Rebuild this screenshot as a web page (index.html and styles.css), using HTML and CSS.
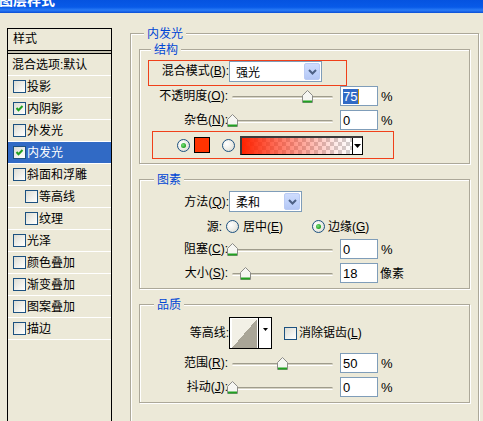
FILE: index.html
```html
<!DOCTYPE html>
<html lang="zh-CN">
<head>
<meta charset="utf-8">
<title>图层样式</title>
<link rel="stylesheet" href="styles.css">
</head>
<body>
<div class="window">
  <div class="titlebar"><span class="title">图层样式</span></div>
  <div class="main">
    <div class="sidebar">
      <div class="side-head">样式</div>
      <div class="side-sep"></div>
      <ul class="side-list">
        <li class="side-item plain">混合选项:默认</li>
        <li class="side-item"><span class="cb"></span>投影</li>
        <li class="side-item"><span class="cb"><svg width="11" height="11" viewBox="0 0 11 11"><path d="M2.5 5 L4.5 7.2 L8.5 3" fill="none" stroke="#21A121" stroke-width="2"/></svg></span>内阴影</li>
        <li class="side-item"><span class="cb"></span>外发光</li>
        <li class="side-item selected"><span class="cb"><svg width="11" height="11" viewBox="0 0 11 11"><path d="M2.5 5 L4.5 7.2 L8.5 3" fill="none" stroke="#21A121" stroke-width="2"/></svg></span>内发光</li>
        <li class="side-item"><span class="cb"></span>斜面和浮雕</li>
        <li class="side-item sub"><span class="cb"></span>等高线</li>
        <li class="side-item sub"><span class="cb"></span>纹理</li>
        <li class="side-item"><span class="cb"></span>光泽</li>
        <li class="side-item"><span class="cb"></span>颜色叠加</li>
        <li class="side-item"><span class="cb"></span>渐变叠加</li>
        <li class="side-item"><span class="cb"></span>图案叠加</li>
        <li class="side-item"><span class="cb"></span>描边</li>
      </ul>
    </div>

    <div class="group outer">
      <span class="group-title t-outer">内发光</span>

      <div class="group inner g1">
        <span class="group-title t-struct">结构</span>
        <div class="blend-box">
          <span class="lbl lbl-blend">混合模式(<u>B</u>):</span>
          <div class="combo combo-blend">
            <span class="combo-text">强光</span>
            <span class="combo-btn"><svg width="9" height="6" viewBox="0 0 9 6"><path d="M1 1 L4.5 4.5 L8 1" fill="none" stroke="#4D6185" stroke-width="2"/></svg></span>
          </div>
        </div>
        <div class="row r-opacity">
          <span class="lbl">不透明度(<u>O</u>):</span>
          <div class="slider"><div class="track"></div><span class="thumb" style="left:70px"><svg width="11" height="13" viewBox="0 0 11 13"><path d="M0.5 5.5 L5.5 0.5 L10.5 5.5 V12.5 H0.5 Z" fill="#F6F6F2" stroke="#8C8C88"/><path d="M1 11.5 H10" stroke="#21A121" stroke-width="2"/></svg></span></div>
          <div class="input"><span class="sel">75</span><span class="caret"></span></div>
          <span class="unit">%</span>
        </div>
        <div class="row r-noise">
          <span class="lbl">杂色(<u>N</u>):</span>
          <div class="slider"><div class="track"></div><span class="thumb" style="left:-5px"><svg width="11" height="13" viewBox="0 0 11 13"><path d="M0.5 5.5 L5.5 0.5 L10.5 5.5 V12.5 H0.5 Z" fill="#F6F6F2" stroke="#8C8C88"/><path d="M1 11.5 H10" stroke="#21A121" stroke-width="2"/></svg></span></div>
          <div class="input">0</div>
          <span class="unit">%</span>
        </div>
        <div class="color-box">
          <span class="radio on"></span>
          <span class="swatch"></span>
          <span class="radio r2"></span>
          <div class="gradient">
            <span class="grad-fill"></span>
            <span class="grad-btn"><svg width="7" height="4" viewBox="0 0 7 4"><path d="M0 0 H7 L3.5 4 Z" fill="#000"/></svg></span>
          </div>
        </div>
      </div>

      <div class="group inner g2">
        <span class="group-title t-elem">图素</span>
        <div class="row r-method">
          <span class="lbl lbl-combo">方法(<u>Q</u>):</span>
          <div class="combo combo-method">
            <span class="combo-text">柔和</span>
            <span class="combo-btn"><svg width="9" height="6" viewBox="0 0 9 6"><path d="M1 1 L4.5 4.5 L8 1" fill="none" stroke="#4D6185" stroke-width="2"/></svg></span>
          </div>
        </div>
        <div class="row r-source">
          <span class="lbl lbl-src">源:</span>
          <span class="radio"></span>
          <span class="opt">居中(<u>E</u>)</span>
          <span class="radio on r-edge"></span>
          <span class="opt">边缘(<u>G</u>)</span>
        </div>
        <div class="row r-choke">
          <span class="lbl">阻塞(<u>C</u>):</span>
          <div class="slider"><div class="track"></div><span class="thumb" style="left:-5px"><svg width="11" height="13" viewBox="0 0 11 13"><path d="M0.5 5.5 L5.5 0.5 L10.5 5.5 V12.5 H0.5 Z" fill="#F6F6F2" stroke="#8C8C88"/><path d="M1 11.5 H10" stroke="#21A121" stroke-width="2"/></svg></span></div>
          <div class="input">0</div>
          <span class="unit">%</span>
        </div>
        <div class="row r-size">
          <span class="lbl">大小(<u>S</u>):</span>
          <div class="slider"><div class="track"></div><span class="thumb" style="left:8px"><svg width="11" height="13" viewBox="0 0 11 13"><path d="M0.5 5.5 L5.5 0.5 L10.5 5.5 V12.5 H0.5 Z" fill="#F6F6F2" stroke="#8C8C88"/><path d="M1 11.5 H10" stroke="#21A121" stroke-width="2"/></svg></span></div>
          <div class="input">18</div>
          <span class="unit unit-cjk">像素</span>
        </div>
      </div>

      <div class="group inner g3">
        <span class="group-title t-qual">品质</span>
        <div class="row r-contour">
          <span class="lbl lbl-combo">等高线:</span>
          <div class="contour">
            <span class="contour-preview"><span class="contour-curve"></span></span>
            <span class="contour-btn"><svg width="5" height="3" viewBox="0 0 5 3"><path d="M0 0 H5 L2.5 3 Z" fill="#000"/></svg></span>
          </div>
          <span class="cb cb-aa"></span>
          <span class="opt">消除锯齿(<u>L</u>)</span>
        </div>
        <div class="row r-range">
          <span class="lbl">范围(<u>R</u>):</span>
          <div class="slider"><div class="track"></div><span class="thumb" style="left:45px"><svg width="11" height="13" viewBox="0 0 11 13"><path d="M0.5 5.5 L5.5 0.5 L10.5 5.5 V12.5 H0.5 Z" fill="#F6F6F2" stroke="#8C8C88"/><path d="M1 11.5 H10" stroke="#21A121" stroke-width="2"/></svg></span></div>
          <div class="input">50</div>
          <span class="unit">%</span>
        </div>
        <div class="row r-jitter">
          <span class="lbl">抖动(<u>J</u>):</span>
          <div class="slider"><div class="track"></div><span class="thumb" style="left:-5px"><svg width="11" height="13" viewBox="0 0 11 13"><path d="M0.5 5.5 L5.5 0.5 L10.5 5.5 V12.5 H0.5 Z" fill="#F6F6F2" stroke="#8C8C88"/><path d="M1 11.5 H10" stroke="#21A121" stroke-width="2"/></svg></span></div>
          <div class="input">0</div>
          <span class="unit">%</span>
        </div>
      </div>
    </div>
  </div>
</div>
</body>
</html>
```

FILE: styles.css
```css
* { box-sizing: border-box; }
html, body { margin: 0; padding: 0; }
body {
  width: 483px;
  height: 421px;
  overflow: hidden;
  background: #ECE9D8;
  color: #000;
  font-family: "Liberation Sans", "Noto Sans CJK SC", sans-serif;
  font-size: 12px;
  line-height: 1;
}
u { text-decoration: underline; text-underline-offset: 1px; }

.window {
  width: 483px;
  height: 421px;
  overflow: hidden;
}

.titlebar {
  height: 13px;
  overflow: hidden;
  background: linear-gradient(to bottom, #0553E0 0%, #085AE8 55%, #2A7CF6 78%, #1A63E6 90%, #0A4FD4 100%);
}
.title {
  display: block;
  margin: -8px 0 0 -1px;
  font-family: "Noto Sans CJK SC", sans-serif;
  font-weight: bold;
  font-size: 14px;
  line-height: 14px;
  color: #fff;
}

.main {
  display: flex;
  align-items: flex-start;
  height: 408px;
  overflow: hidden;
}

/* ---------- sidebar ---------- */
.sidebar {
  flex: none;
  width: 105px;
  height: 400px;
  margin: 15px 0 0 7px;
  border: 1px solid #000;
  border-bottom: none;
}
.side-head {
  height: 22px;
  line-height: 21px;
  padding-left: 5px;
  border-bottom: 1px solid #000;
}
.side-sep { height: 2px; background: #C4C1B0; }
.side-list {
  list-style: none;
  margin: 0;
  padding: 0;
  border-top: 1px solid #000;
}
.side-item {
  height: 22px;
  display: flex;
  align-items: center;
  gap: 1px;
  padding-left: 5px;
  border-bottom: 1px solid #fff;
  white-space: nowrap;
}
.side-item.plain { padding-left: 4px; }
.side-item.sub { padding-left: 17px; }
.side-item.selected { background: #316AC5; color: #fff; }

.cb {
  flex: none;
  width: 13px;
  height: 13px;
  display: inline-flex;
  align-items: center;
  justify-content: center;
  border: 1px solid #1C5180;
  background: linear-gradient(135deg, #DCDCD3 0%, #F2F2EE 60%, #FFFFFF 100%);
}
.cb svg { display: block; }

/* ---------- groups ---------- */
.group {
  border: 1px solid #ACA899;
  box-shadow: 1px 1px 0 #fff, inset 1px 1px 0 #fff;
}
.group-title {
  display: block;
  width: max-content;
  height: 12px;
  line-height: 12px;
  margin-top: -7px;
  padding: 0 3px;
  background: #ECE9D8;
  color: #0046D5;
  font-family: "Noto Sans CJK SC", sans-serif;
}
.outer {
  flex: none;
  width: 349px;
  height: 400px;
  margin: 20px 0 0 18px;
  padding: 0 8px;
}
.t-outer { margin-left: 5px; }
.g1 { margin-top: 10px; padding-bottom: 4px; }
.g2 { margin-top: 15px; padding-bottom: 5px; }
.g3 { margin-top: 15px; padding-bottom: 5px; }
.t-struct { margin-left: 11px; }
.t-elem, .t-qual { margin-left: 14px; }

/* ---------- rows ---------- */
.row {
  display: flex;
  align-items: center;
  height: 20px;
}
.lbl {
  flex: none;
  width: 88px;
  text-align: right;
  line-height: 20px;
  white-space: nowrap;
}
.lbl-combo { width: 89px; }
.lbl-src { width: 82px; }

.blend-box {
  display: flex;
  align-items: flex-start;
  width: 199px;
  height: 26px;
  margin: 5px 0 0 8px;
  border: 1px solid #F0401A;
}
.lbl-blend { width: 80px; line-height: 21px; }

.combo {
  flex: none;
  display: flex;
  align-items: center;
  justify-content: space-between;
  height: 21px;
  border: 1px solid #7F9DB9;
  background: #fff;
  padding: 0 1px 0 6px;
  font-family: "Noto Sans CJK SC", sans-serif;
}
.combo-blend { width: 93px; }
.combo-method { width: 73px; }
.combo-text { line-height: 19px; }
.combo-btn {
  width: 16px;
  height: 17px;
  display: flex;
  align-items: center;
  justify-content: center;
  border: 1px solid #BACBF4;
  border-radius: 2px;
  background: linear-gradient(to bottom, #CFDCFD 0%, #C1D3FB 50%, #B4C7F5 100%);
}
.combo-btn svg { display: block; }

.r-noise { margin-top: 4px; }
.r-method { height: 21px; margin-top: 6px; }
.r-source { height: 21px; margin-top: 4px; }
.r-choke { margin-top: 2px; }
.r-size { margin-top: 4px; }
.r-contour { height: 32px; margin-top: 7px; }
.r-range { margin-top: 4px; }
.r-jitter { margin-top: 4px; }

.slider {
  flex: none;
  position: relative;
  width: 101px;
  height: 20px;
  margin-left: 4px;
}
.track {
  position: absolute;
  left: 0;
  right: 0;
  top: 10px;
  height: 3px;
  border-radius: 2px;
  border-top: 1px solid #9F9C8C;
  border-bottom: 1px solid #fff;
  background: #D6D3C4;
}
.thumb {
  position: absolute;
  top: 4px;
  width: 11px;
  height: 13px;
}
.thumb svg { display: block; }

.input {
  flex: none;
  width: 38px;
  height: 20px;
  margin-left: 7px;
  padding-left: 2px;
  border: 1px solid #7F9DB9;
  background: #fff;
  display: flex;
  align-items: center;
  font-size: 13px;
  line-height: 15px;
}
.sel { background: #316AC5; color: #fff; padding: 0 1px 0 0; }
.caret { width: 1px; height: 15px; background: #C8960A; }
.unit { margin-left: 3px; font-size: 13px; }
.unit-cjk { font-size: 12px; font-family: "Noto Sans CJK SC", sans-serif; margin-left: 2px; }

/* ---------- color box ---------- */
.color-box {
  display: flex;
  align-items: center;
  width: 242px;
  height: 28px;
  margin: 1px 0 0 12px;
  padding-left: 24px;
  border: 1px solid #F0401A;
}
.radio {
  flex: none;
  position: relative;
  width: 13px;
  height: 13px;
  border-radius: 50%;
  border: 1px solid #1C5180;
  background: radial-gradient(circle at 35% 35%, #FFFFFF 0%, #F0F0EA 45%, #D4D4CC 100%);
}
.radio.on::after {
  content: "";
  position: absolute;
  left: 3px;
  top: 3px;
  width: 5px;
  height: 5px;
  border-radius: 50%;
  background: radial-gradient(circle at 40% 40%, #7BE07B 0%, #21A121 70%);
}
.swatch {
  flex: none;
  width: 16px;
  height: 16px;
  margin-left: 4px;
  border: 1px solid #000;
  background: #FF3300;
}
.radio.r2 { margin-left: 12px; }
.gradient {
  flex: none;
  display: flex;
  width: 123px;
  height: 19px;
  margin-left: 5px;
  border-top: 2px solid #3A3A3A;
  border-left: 2px solid #3A3A3A;
  border-right: 1px solid #000;
  border-bottom: 1px solid #000;
  background: #fff;
}
.grad-fill {
  flex: 1;
  background:
    linear-gradient(to right, rgba(255, 34, 0, 1) 0%, rgba(255, 50, 20, 0.6) 40%, rgba(255, 80, 60, 0.12) 85%, rgba(255, 80, 60, 0) 100%),
    repeating-conic-gradient(#D2CFCF 0 25%, #FFFFFF 0 50%) 0 0 / 8px 8px;
}
.grad-btn {
  flex: none;
  width: 10px;
  display: flex;
  align-items: center;
  justify-content: center;
  border-left: 1px solid #000;
  background: #fff;
}
.grad-btn svg { display: block; }

/* ---------- source ---------- */
.r-source .radio { margin-left: 4px; }
.r-source .radio.r-edge { margin-left: 29px; }
.opt { margin-left: 4px; line-height: 20px; white-space: nowrap; }
.r-edge + .opt { margin-left: 3px; }

/* ---------- contour ---------- */
.contour {
  flex: none;
  display: flex;
  width: 43px;
  height: 32px;
  border: 1px solid #000;
  background: #fff;
}
.contour-preview {
  flex: none;
  width: 29px;
  padding: 1px 1px 0 2px;
  border-right: 1px solid #000;
  background: #fff;
  display: flex;
}
.contour-curve {
  flex: 1;
  background: linear-gradient(to top left, #A9A597 50%, #F2F0E6 50%);
}
.contour-btn {
  flex: 1;
  display: flex;
  justify-content: center;
  padding-top: 10px;
}
.contour-btn svg { display: block; }
.cb-aa { margin-left: 12px; }
.cb-aa + .opt { margin-left: 2px; }
```
